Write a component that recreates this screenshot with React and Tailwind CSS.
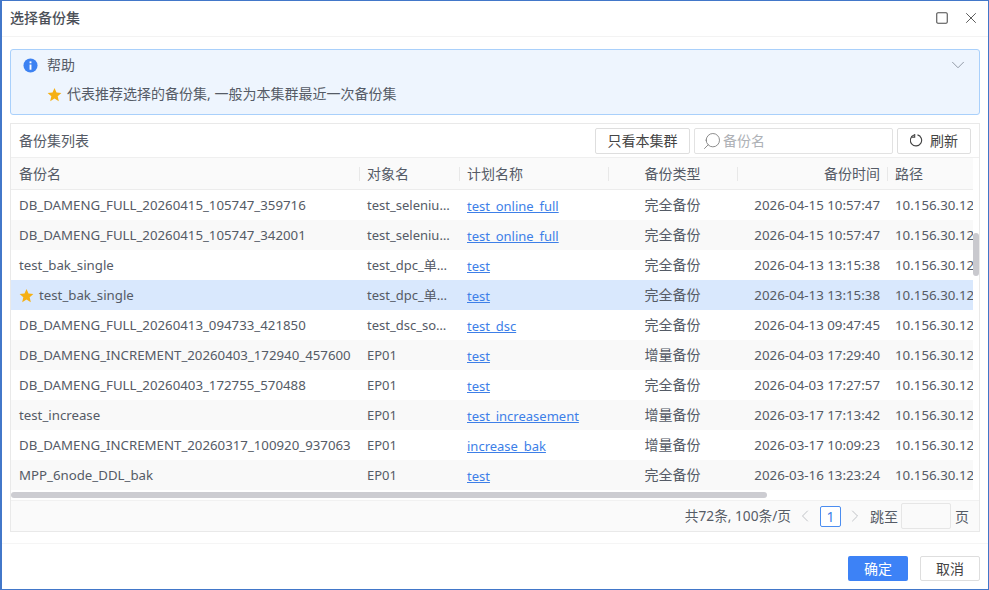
import { ChevronDown, ChevronLeft, ChevronRight, Search, Square, X } from 'lucide-react'

const rows = [
  { name: 'DB_DAMENG_FULL_20260415_105747_359716', target: 'test_selenium_full', plan: 'test_online_full', type: '完全备份', time: '2026-04-15 10:57:47' },
  { name: 'DB_DAMENG_FULL_20260415_105747_342001', target: 'test_selenium_full', plan: 'test_online_full', type: '完全备份', time: '2026-04-15 10:57:47' },
  { name: 'test_bak_single', target: 'test_dpc_单节点集群', plan: 'test', type: '完全备份', time: '2026-04-13 13:15:38' },
  { name: 'test_bak_single', target: 'test_dpc_单节点集群', plan: 'test', type: '完全备份', time: '2026-04-13 13:15:38', star: true },
  { name: 'DB_DAMENG_FULL_20260413_094733_421850', target: 'test_dsc_source', plan: 'test_dsc', type: '完全备份', time: '2026-04-13 09:47:45' },
  { name: 'DB_DAMENG_INCREMENT_20260403_172940_457600', target: 'EP01', plan: 'test', type: '增量备份', time: '2026-04-03 17:29:40' },
  { name: 'DB_DAMENG_FULL_20260403_172755_570488', target: 'EP01', plan: 'test', type: '完全备份', time: '2026-04-03 17:27:57' },
  { name: 'test_increase', target: 'EP01', plan: 'test_increasement', type: '增量备份', time: '2026-03-17 17:13:42' },
  { name: 'DB_DAMENG_INCREMENT_20260317_100920_937063', target: 'EP01', plan: 'increase_bak', type: '增量备份', time: '2026-03-17 10:09:23' },
  { name: 'MPP_6node_DDL_bak', target: 'EP01', plan: 'test', type: '完全备份', time: '2026-03-16 13:23:24' },
]

function Star({ className }) {
  return (
    <svg className={className} viewBox="0 0 24 24" fill="#f5b014">
      <path d="M12 1.5l3.2 7.3 7.8.8-5.9 5.2 1.8 7.8L12 18.5l-6.9 4.1 1.8-7.8L1 9.6l7.8-.8z" />
    </svg>
  )
}

function HeadCell({ className, children }) {
  return (
    <div className={`relative flex h-full shrink-0 items-center px-2 ${className}`}>
      {children}
      <span className="absolute -right-px top-[9px] h-[14px] w-px bg-[#e8e8e8]" />
    </div>
  )
}

export default function App() {
  return (
    <div className="flex h-[590px] w-[989px] flex-col overflow-hidden border border-l-2 border-[#4277c9] bg-white font-['Noto_Sans','Noto_Sans_CJK_SC',sans-serif] text-[14px] text-[#555b66]">
      <div className="flex h-[36px] shrink-0 items-center justify-between border-b border-[#f3f3f3] pb-[2px] pl-[8px] pr-[8px]">
        <span className="font-medium text-[#4b5058]">选择备份集</span>
        <div className="flex items-center gap-[13px] text-[#4a4a4a]">
          <Square size={14} strokeWidth={1.8} />
          <X size={18} strokeWidth={1.2} />
        </div>
      </div>

      <div className="flex min-h-0 flex-1 flex-col px-[8px] pr-[8px] pt-[12px]">
        <div className="h-[66px] shrink-0 rounded-[3px] border border-[#a9d0fb] bg-[#eef5fe] pl-[12px] pr-[14px]">
          <div className="flex h-[30px] items-center justify-between">
            <div className="flex items-center gap-[9px]">
              <svg className="h-[15px] w-[15px]" viewBox="0 0 16 16">
                <circle cx="8" cy="8" r="7.5" fill="#3d82f2" />
                <rect x="7" y="7" width="2" height="5.5" fill="#fff" />
                <rect x="7" y="3.6" width="2" height="2" fill="#fff" />
              </svg>
              <span className="pb-[2px]">帮助</span>
            </div>
            <ChevronDown size={22} strokeWidth={0.9} className="-mr-[4px] text-[#7f8794]" />
          </div>
          <div className="flex h-[28px] items-center gap-[5px] pl-[24px]">
            <Star className="h-[15px] w-[15px]" />
            <span className="pb-[2px]">代表推荐选择的备份集, 一般为本集群最近一次备份集</span>
          </div>
        </div>

        <div className="mt-[8px] flex h-[409px] shrink-0 flex-col border border-[#e9e9e9]">
          <div className="flex h-[34px] shrink-0 items-center justify-between border-b border-[#efefef] pl-[8px] pr-[8px]">
            <span>备份集列表</span>
            <div className="flex items-center gap-[4px]">
              <button className="h-[26px] w-[95px] rounded-[2px] border border-[#dedede] bg-white text-[#444]">只看本集群</button>
              <div className="flex h-[26px] w-[199px] items-center gap-[1px] rounded-[2px] border border-[#e2e2e2] bg-white pl-[7px] text-[#aeb1b6]">
                <Search size={20} strokeWidth={1} className="-scale-x-100 text-[#777]" />
                <span>备份名</span>
              </div>
              <button className="flex h-[26px] w-[74px] items-center justify-center gap-[5px] rounded-[2px] border border-[#dedede] bg-white text-[#444]">
                <svg className="h-[15px] w-[15px]" viewBox="0 0 16 16" fill="none" stroke="currentColor" strokeWidth="1.2">
                  <path d="M4.2 2.2A6 6 0 1 0 8 2" />
                  <path d="M5 1v3.4H1.8" />
                </svg>
                刷新
              </button>
            </div>
          </div>

          <div className="flex min-h-0 flex-1">
            <div className="min-w-0 flex-1 overflow-hidden">
              <div className="flex h-[32px] items-center border-b border-[#ececec] bg-[#fafafa]">
                <HeadCell className="w-[348px]">备份名</HeadCell>
                <HeadCell className="w-[100px]">对象名</HeadCell>
                <HeadCell className="w-[149px]">计划名称</HeadCell>
                <HeadCell className="w-[129px] justify-center">备份类型</HeadCell>
                <HeadCell className="w-[150px] justify-end pr-[7px]">备份时间</HeadCell>
                <div className="px-2">路径</div>
              </div>
              {rows.map((row, i) => (
                <div
                  key={i}
                  className={`flex h-[30px] items-center whitespace-nowrap text-[13px] ${row.star ? 'bg-[#d9e8fd]' : i % 2 === 1 ? 'bg-[#f9f9f9]' : 'bg-white'}`}
                >
                  <div className="flex w-[348px] shrink-0 items-center gap-[5px] px-2 text-[13.25px]">
                    {row.star && <Star className="h-[15px] w-[15px]" />}
                    <span className="pt-[2px]">{row.name}</span>
                  </div>
                  <div className="w-[100px] shrink-0 truncate px-2 pt-[2px]">{row.target}</div>
                  <div className="w-[149px] shrink-0 px-2 pt-[4px] text-[#3d7fe8] underline">{row.plan}</div>
                  <div className="w-[129px] shrink-0 pb-[2px] text-center text-[14px]">{row.type}</div>
                  <div className="w-[150px] shrink-0 pr-[7px] pt-[2px] text-right text-[13.3px]">{row.time}</div>
                  <div className="px-2 pt-[2px] text-[13.3px]">10.156.30.125</div>
                </div>
              ))}
            </div>
            <div className="w-[6px] shrink-0 pt-[75px]">
              <div className="h-[43px] rounded-[3px] bg-[#c9c9ce]" />
            </div>
          </div>

          <div className="h-[8px] shrink-0 bg-white">
            <div className="h-[6px] w-[756px] rounded-[3px] bg-[#cdcdd2]" />
          </div>

          <div className="flex h-[31px] shrink-0 items-center justify-end border-t border-[#f1f1f1] bg-[#fafafa] pr-[10px]">
            <span className="text-[13.7px]">共72条, 100条/页</span>
            <ChevronLeft size={20} strokeWidth={1} className="ml-[4px] text-[#b5b8bd]" />
            <span className="ml-[5px] flex h-[21px] w-[21px] items-center justify-center rounded-[2px] border border-[#4b8df0] bg-white text-[#3d7fe8]">1</span>
            <ChevronRight size={20} strokeWidth={1} className="ml-[4px] text-[#b5b8bd]" />
            <span className="ml-[5px]">跳至</span>
            <div className="ml-[3px] h-[26px] w-[50px] rounded-[2px] border border-[#e6e6e6] bg-[#fafafa]" />
            <span className="ml-[4px]">页</span>
          </div>
        </div>
      </div>

      <div className="flex h-[46px] shrink-0 items-center justify-end gap-[12px] border-t border-[#f5f5f5] pr-[8px] pt-[4px]">
        <button className="h-[25px] w-[60px] rounded-[2px] bg-[#3d82f6] text-white">确定</button>
        <button className="h-[25px] w-[60px] rounded-[2px] border border-[#dedede] bg-white text-[#444]">取消</button>
      </div>
    </div>
  )
}
